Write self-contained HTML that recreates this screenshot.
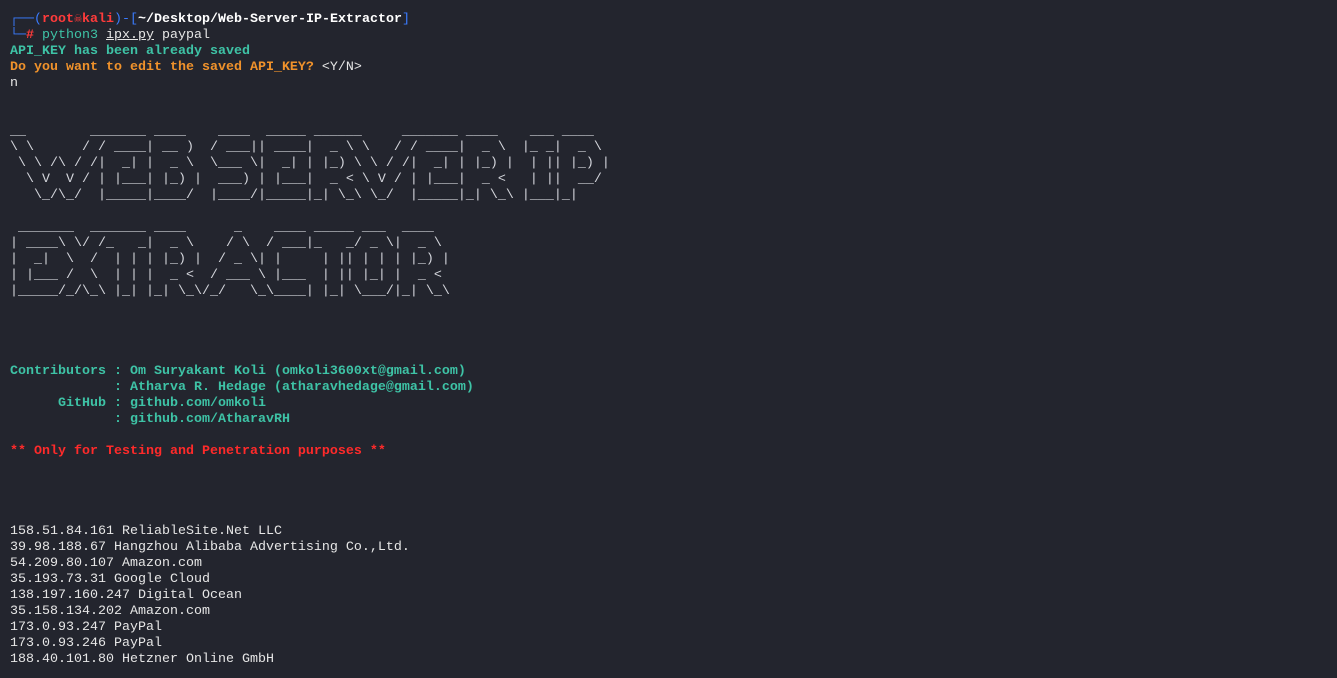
<!DOCTYPE html>
<html><head><meta charset="utf-8"><style>
html,body{margin:0;padding:0;background:#23252e;width:1337px;height:678px;overflow:hidden}
pre{margin:0;position:absolute;left:10px;top:12px;font-family:"Liberation Mono","DejaVu Sans Mono",monospace;font-size:13.33px;line-height:16px;color:#e6e6e6;white-space:pre}
.b{color:#3a7bff}.r{color:#ff3b3b;font-weight:bold}.t{color:#3ec3a6;font-weight:bold}.o{color:#f0922b;font-weight:bold}
.w{color:#ffffff;font-weight:bold}.a{color:#d4d6dc}.red{color:#ff2a2a;font-weight:bold}
u{text-decoration:underline}
</style></head><body><pre><span class="b">┌──(</span><span class="r">root☠kali</span><span class="b">)-[</span><span class="w">~/Desktop/Web-Server-IP-Extractor</span><span class="b">]</span>
<span class="b">└─</span><span class="r">#</span> <span style="color:#3ec3a6">python3</span> <u>ipx.py</u> paypal
<span class="t">API_KEY has been already saved</span>
<span class="o">Do you want to edit the saved API_KEY?</span> &lt;Y/N&gt;
n


<span class="a">__        _______ ____    ____  _____ ______     _______ ____    ___ ____  
\ \      / / ____| __ )  / ___|| ____|  _ \ \   / / ____|  _ \  |_ _|  _ \ 
 \ \ /\ / /|  _| |  _ \  \___ \|  _| | |_) \ \ / /|  _| | |_) |  | || |_) |
  \ V  V / | |___| |_) |  ___) | |___|  _ &lt; \ V / | |___|  _ &lt;   | ||  __/ 
   \_/\_/  |_____|____/  |____/|_____|_| \_\ \_/  |_____|_| \_\ |___|_|    
                                                                           
 _______  _______ ____      _    ____ _____ ___  ____  
| ____\ \/ /_   _|  _ \    / \  / ___|_   _/ _ \|  _ \ 
|  _|  \  /  | | | |_) |  / _ \| |     | || | | | |_) |
| |___ /  \  | | |  _ &lt;  / ___ \ |___  | || |_| |  _ &lt; 
|_____/_/\_\ |_| |_| \_\/_/   \_\____| |_| \___/|_| \_\</span>




<span class="t">Contributors : Om Suryakant Koli (omkoli3600xt@gmail.com)
             : Atharva R. Hedage (atharavhedage@gmail.com)
      GitHub : github.com/omkoli
             : github.com/AtharavRH</span>

<span class="red">** Only for Testing and Penetration purposes **</span>




158.51.84.161 ReliableSite.Net LLC
39.98.188.67 Hangzhou Alibaba Advertising Co.,Ltd.
54.209.80.107 Amazon.com
35.193.73.31 Google Cloud
138.197.160.247 Digital Ocean
35.158.134.202 Amazon.com
173.0.93.247 PayPal
173.0.93.246 PayPal
188.40.101.80 Hetzner Online GmbH</pre></body></html>
